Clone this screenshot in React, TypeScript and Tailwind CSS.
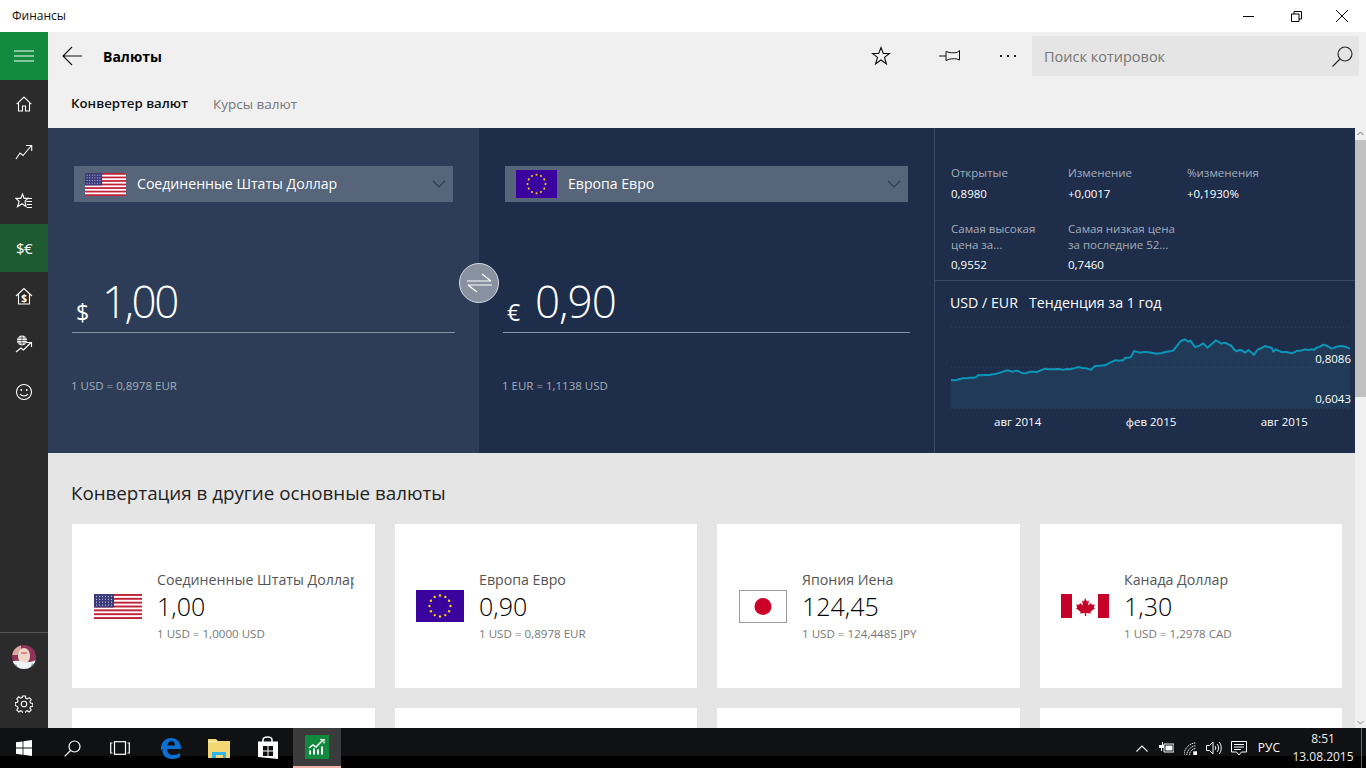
import React from 'react';

const font = { fontFamily: '"Open Sans", "Noto Sans", sans-serif' };

const chartLine =
  '63,212 72,213 80,212 90,209 100,207 110,207 120,205 130,205 138,204 145,197 155,198 165,197 178,197 190,195 200,193 210,190 222,186 235,183 242,186 250,187 258,184 265,185 272,189 280,192 290,191 300,187 310,187 320,188 332,183 345,178 357,180 370,180 385,179 400,181 410,179 420,180 432,177 445,173 458,176 470,177 478,180 483,181 495,170 510,169 525,168 540,160 555,153 568,154 580,152 586,145 595,145 603,143 612,125 620,127 630,130 640,128 650,128 665,130 680,133 695,131 710,127 720,126 730,123 742,108 752,95 760,92 765,90 772,95 775,97 782,94 785,100 795,113 803,111 810,108 820,102 826,108 832,115 845,104 858,93 866,98 875,103 883,100 890,102 905,110 912,120 920,126 928,122 935,123 945,130 955,122 965,130 972,137 980,124 985,120 995,116 1005,110 1015,113 1025,115 1030,127 1038,120 1045,124 1055,128 1070,128 1085,132 1095,128 1100,124 1112,124 1125,120 1135,122 1145,120 1152,121 1160,115 1170,112 1180,106 1192,110 1205,118 1220,112 1235,110 1248,113 1260,118';

const UsFlag = ({ className }: { className: string }) => (
  <svg viewBox="0 0 48 26" preserveAspectRatio="none" className={className}>
    <rect width="48" height="26" fill="#fff" />
    {[0, 4, 8, 12, 16, 20, 24].map((y) => (
      <rect key={y} y={y} width="48" height="2" fill="#c0223a" />
    ))}
    <rect width="20" height="14" fill="#3c3b7e" />
    {[2, 5, 8, 11].map((y) =>
      [2, 5, 8, 11, 14, 17].map((x) => <rect key={x + '-' + y} x={x} y={y} width="1" height="1" fill="#ddd" />)
    )}
  </svg>
);

const EuFlag = ({ className }: { className: string }) => {
  const stars = Array.from({ length: 12 }, (_, i) => i * 30);
  return (
    <svg viewBox="0 0 48 32" preserveAspectRatio="none" className={className}>
      <rect width="48" height="32" fill="#3a039d" />
      {stars.map((a) => (
        <circle
          key={a}
          cx={24 + 10.5 * Math.cos((a * Math.PI) / 180)}
          cy={16 + 10.5 * Math.sin((a * Math.PI) / 180)}
          r="1.2"
          fill="#f7d308"
        />
      ))}
    </svg>
  );
};

const JpFlag = ({ className }: { className: string }) => (
  <svg viewBox="0 0 48 33" className={className}>
    <rect x="0.5" y="0.5" width="47" height="32" fill="#fff" stroke="#999" />
    <circle cx="24" cy="16.5" r="8.5" fill="#cc0029" />
  </svg>
);

const CaFlag = ({ className }: { className: string }) => (
  <svg viewBox="0 0 48 24" className={className}>
    <rect width="48" height="24" fill="#fff" />
    <rect width="11" height="24" fill="#c60028" />
    <rect x="37" width="11" height="24" fill="#c60028" />
    <path
      d="M24 4l2 3.5 2-1-1 5 3-2.5.8 1.8 3-.4-1 3 1.2.8-4.6 3.6.5 1.7-4.7-.6V22h-1.4v-3.1l-4.7.6.5-1.7-4.6-3.6 1.2-.8-1-3 3 .4.8-1.8 3 2.5-1-5 2 1z"
      fill="#c60028"
    />
  </svg>
);

const Swap = () => (
  <svg width="25" height="20" viewBox="0 0 25 20" fill="none" stroke="#fff" strokeWidth="1.2">
    <path d="M0 8h24M15 1l9 7M1 12h24M1 12l9 7" />
  </svg>
);

const Chevron = () => (
  <svg width="14" height="8" viewBox="0 0 14 8" fill="none" stroke="#2f3b4e" strokeWidth="1.1">
    <path d="M1 1l6 6 6-6" />
  </svg>
);

const NavIcon = ({ children, active }: { children: React.ReactNode; active?: boolean }) => (
  <div className={'h-12 flex items-center justify-center text-white ' + (active ? 'bg-[#1e5b33]' : '')}>{children}</div>
);

const Stroke = ({ children, w = 18, h = 18 }: { children: React.ReactNode; w?: number; h?: number }) => (
  <svg width={w} height={h} viewBox={`0 0 ${w} ${h}`} fill="none" stroke="currentColor" strokeWidth="1.1">
    {children}
  </svg>
);

const Sidebar = () => (
  <div className="w-12 bg-[#2b2b2b] flex flex-col shrink-0">
    <div className="h-12 bg-[#118a3e] flex items-center justify-center">
      <svg width="20" height="12" viewBox="0 0 20 12" stroke="#fff" strokeWidth="1">
        <path d="M0 1h20M0 6h20M0 11h20" />
      </svg>
    </div>
    <NavIcon>
      <Stroke w={16} h={16}>
        <path d="M.7 8.2L8 1l7.3 7.2M2.5 7v8h4v-5h3v5h4V7" />
      </Stroke>
    </NavIcon>
    <NavIcon>
      <Stroke>
        <path d="M1 16l4-6 3 2.500 8.500-10M11 2.500h5.700v5.500" />
      </Stroke>
    </NavIcon>
    <NavIcon>
      <Stroke>
        <path d="M7.5 3l1.6 4.4H13L10 10.2l1 5.3-4-2.8-4.5 3 1.7-5.300L1 7.400h4.800zM11 7.500h6M11.500 10.500h5.500M12 13.500h5M12 16.500h5" />
      </Stroke>
    </NavIcon>
    <NavIcon active>
      <span className="text-[15px] leading-none tracking-[-0.5px]">$€</span>
    </NavIcon>
    <NavIcon>
      <Stroke>
        <path d="M1 9l8-7.500L17 9M3.500 7.500V17h11V7.500" />
        <text x="9" y="14.500" fontSize="10" fontWeight="700" textAnchor="middle" fill="currentColor" stroke="none">
          $
        </text>
      </Stroke>
    </NavIcon>
    <NavIcon>
      <Stroke>
        <circle cx="7" cy="5.500" r="5" fill="currentColor" stroke="none" />
        <path d="M7 .5v10M2 5.500h10M2.800 3h8.400M2.800 8h8.400" stroke="#2b2b2b" strokeWidth="0.700" />
        <path d="M1 17l5-4 2.500 2L16 7.500M11.500 7.500H16.500V12" />
      </Stroke>
    </NavIcon>
    <NavIcon>
      <Stroke>
        <circle cx="9" cy="9" r="7.500" />
        <circle cx="6.300" cy="7" r="0.900" fill="currentColor" stroke="none" />
        <circle cx="11.700" cy="7" r="0.900" fill="currentColor" stroke="none" />
        <path d="M5 11c1.800 2.600 6.200 2.600 8 0" />
      </Stroke>
    </NavIcon>
    <div className="mt-auto border-t border-[#555] h-12 flex items-center justify-center">
      <svg width="24" height="24" viewBox="0 0 24 24">
        <defs>
          <clipPath id="avatar">
            <circle cx="12" cy="12" r="12" />
          </clipPath>
        </defs>
        <g clipPath="url(#avatar)">
          <rect width="24" height="24" fill="#8c3557" />
          <rect width="9" height="10" fill="#d9a99f" />
          <ellipse cx="12" cy="11" rx="6" ry="8" fill="#eed7c8" />
          <rect x="9" y="7.500" width="6" height="1" fill="#c83a4d" />
          <path d="M0 24v-7c4-2 6-1 12 0s9-1 12-2v9z" fill="#eef3f3" />
          <path d="M2 19l3 1-1 3zM20 18l2 2-3 2z" fill="#6f9aa5" />
        </g>
      </svg>
    </div>
    <div className="h-12 flex items-center justify-center text-white">
      <Stroke>
        <circle cx="9" cy="9" r="2.800" />
        <path d="M7.600 1h2.800l.4 2.300 1.500.6 1.900-1.300 2 2-1.300 1.900.6 1.500 2.300.4v2.800l-2.300.4-.6 1.500 1.300 1.900-2 2-1.900-1.300-1.500.6-.4 2.300H7.600l-.4-2.300-1.500-.6-1.900 1.300-2-2 1.300-1.900-.6-1.500L.2 10.400V7.600l2.300-.4.6-1.500-1.300-1.900 2-2 1.900 1.300 1.500-.6z" />
      </Stroke>
    </div>
  </div>
);

const Converter = ({ flag, name, symbol, amount, rate, dropdown, line, bg, width, amountClass }: {
  flag: React.ReactNode;
  name: string;
  symbol: string;
  amount: string;
  rate: string;
  dropdown: string;
  line: string;
  bg: string;
  width: string;
  amountClass: string;
}) => (
  <div className={`${bg} ${width} pl-[26px] shrink-0 pt-[38px] flex flex-col`}>
    <div className={`${dropdown} h-9 bg-[#566579] flex items-center pl-[11px] pr-[7px] text-white`}>
      {flag}
      <span className="ml-[11px] text-[14.1px]">{name}</span>
      <span className="ml-auto">
        <Chevron />
      </span>
    </div>
    <div className={`${line} mt-[71px] -ml-0.5 h-[60px] border-b border-[#8a94a3] flex items-end pb-[3px] pl-1 text-white`}>
      <span className="text-[23px] leading-[34px] w-[28px]">{symbol}</span>
      <span className={`text-[44px] leading-[56px] font-light ${amountClass}`}>{amount}</span>
    </div>
    <div className="mt-[45px] -ml-[3px] text-[11.5px] text-[#a5adb9] leading-4">{rate}</div>
  </div>
);

const stats = [
  { label: 'Открытые', value: '0,8980' },
  { label: 'Изменение', value: '+0,0017' },
  { label: '%изменения', value: '+0,1930%' },
];

const StatsPanel = () => (
  <div className="flex-1 border-l border-[#3d4c66] bg-[#1d2d4a] text-white flex flex-col">
    <div className="h-[153px] border-b border-[#3d4c66] pl-4 pt-[37px] text-[11.5px]">
      <div className="grid grid-cols-[117px_119px_100px]">
        {stats.map((s) => (
          <div key={s.label}>
            <div className="h-4 leading-4 text-[#a5adb9]">{s.label}</div>
            <div className="mt-[5px] h-4 leading-4">{s.value}</div>
          </div>
        ))}
      </div>
      <div className="grid grid-cols-[117px_119px] mt-[19px]">
        <div>
          <div className="leading-4 text-[#a5adb9]">
            Самая высокая
            <br />
            цена за...
          </div>
          <div className="mt-1 leading-4">0,9552</div>
        </div>
        <div>
          <div className="leading-4 text-[#a5adb9]">
            Самая низкая цена
            <br />
            за последние 52...
          </div>
          <div className="mt-1 leading-4">0,7460</div>
        </div>
      </div>
    </div>
    <div className="pl-[15px] pt-[12px] text-[14.2px] leading-5 whitespace-pre">USD / EUR   Тенденция за 1 год</div>
    <div className="relative ml-4 mt-[13px] w-[400px] h-[84px]">
      <svg width="400" height="84" viewBox="63 50 1200 252" className="block">
        <polygon points={`63,297 ${chartLine} 1260,297`} fill="#203a58" />
        <path d="M63 54H1260M63 175H1260M63 297H1260" stroke="#34506c" strokeWidth="2" strokeDasharray="3 9" />
        <polyline points={chartLine} fill="none" stroke="#0a96b9" strokeWidth="6" strokeLinejoin="round" />
      </svg>
      <span className="absolute right-0 top-[25px] text-[11.5px] leading-4">0,8086</span>
      <span className="absolute right-0 top-[65px] text-[11.5px] leading-4">0,6043</span>
    </div>
    <div className="ml-4 w-[400px] grid grid-cols-3 text-center text-[11.5px] leading-4 mt-[4px]">
      <span>авг 2014</span>
      <span>фев 2015</span>
      <span>авг 2015</span>
    </div>
  </div>
);

const cards = [
  { name: 'Соединенные Штаты Доллар', value: '1,00', rate: '1 USD = 1,0000 USD', pad: 'pl-[22px]', flag: <UsFlag className="w-12 h-[25px]" /> },
  { name: 'Европа Евро', value: '0,90', rate: '1 USD = 0,8978 EUR', pad: 'pl-[21px]', flag: <EuFlag className="w-12 h-8" /> },
  { name: 'Япония Иена', value: '124,45', rate: '1 USD = 124,4485 JPY', pad: 'pl-[22px]', flag: <JpFlag className="w-12 h-[33px]" /> },
  { name: 'Канада Доллар', value: '1,30', rate: '1 USD = 1,2978 CAD', pad: 'pl-[21px]', flag: <CaFlag className="w-12 h-6" /> },
];

const Scrollbar = () => (
  <div className="w-[11px] shrink-0 bg-[#f0f0f0] flex flex-col items-center">
    <svg width="9" height="12" viewBox="0 0 9 12" fill="none" stroke="#666" className="shrink-0">
      <path d="M1.5 7l3-3 3 3" />
    </svg>
    <div className="w-full h-[257px] bg-[#c0c0c0]" />
    <svg width="9" height="12" viewBox="0 0 9 12" fill="none" stroke="#888" className="mt-auto shrink-0">
      <path d="M1.5 5l3 3 3-3" />
    </svg>
  </div>
);

const Taskbar = () => (
  <div className="h-10 shrink-0 bg-[linear-gradient(#0f1112_70%,#000_70%)] flex items-center text-white">
    <div className="w-12 flex justify-center">
      <svg width="16" height="16" viewBox="0 0 16 16" fill="#fff">
        <path d="M0 2.300l6.600-.9v6.200H0zM7.400 1.300L16 0v7.600H7.400zM0 8.400h6.600v6.300L0 13.800zM7.400 8.400H16V16l-8.600-1.200z" />
      </svg>
    </div>
    <div className="w-12 flex justify-center">
      <svg width="17" height="17" viewBox="0 0 17 17" fill="none" stroke="#fff" strokeWidth="1.2">
        <circle cx="10.5" cy="6.5" r="5.5" />
        <path d="M6.5 10.500L.7 16.300" />
      </svg>
    </div>
    <div className="w-12 flex justify-center">
      <svg width="20" height="14" viewBox="0 0 20 14" fill="none" stroke="#fff" strokeWidth="1.2">
        <rect x="4.5" y="0.7" width="11" height="12.6" />
        <path d="M2.5 2H.7v10h1.800M17.500 2h1.800v10h-1.800" />
      </svg>
    </div>
    <div className="w-[52px] flex justify-center">
      <svg width="21" height="22" viewBox="0 0 21 22" fill="none">
        <path
          d="M1 10C2 4 6 1 11 1c6 0 10 4 10 11H7c0 4 3 6 6 6 3 0 5-1 7-2v4c-2 1-4 2-8 2-6 0-10-4-9.500-9C3 11 2 12 1 14zM7.500 8.500h7.500c0-3-1.500-4.500-3.700-4.500S8 6 7.500 8.500z"
          fill="#0a6fd1"
        />
      </svg>
    </div>
    <div className="w-[46px] flex justify-center">
      <svg width="22" height="20" viewBox="0 0 22 20">
        <path d="M0 1h8l2 2h12v17H0z" fill="#f3d774" />
        <rect y="3" width="9" height="1.5" fill="#fff2b0" />
        <path d="M4 20v-6h14v6h-3v-3H8v3z" fill="#2eb6e8" />
      </svg>
    </div>
    <div className="w-[51px] flex justify-center">
      <svg width="22" height="24" viewBox="0 0 22 24" fill="none">
        <path d="M6 6V4c0-4 9-4 9 0v2" stroke="#fff" strokeWidth="1.5" />
        <path d="M1 5.500h20V23L1 21z" fill="#fff" />
        <path d="M6 10h4.500v4.500H6zM11.500 10H16v4.500h-4.500zM6 15.500h4.500V20H6zM11.500 15.500H16V20h-4.500z" fill="#111" />
      </svg>
    </div>
    <div className="w-12 h-full bg-[#3b3b3b] border-b-2 border-[#f4b3aa] flex justify-center items-center">
      <svg width="24" height="24" viewBox="0 0 24 24">
        <rect width="24" height="24" fill="#118a3e" />
        <path d="M4 13l4-3 3 2 7-7" fill="none" stroke="#fff" strokeWidth="1.5" />
        <path d="M15 4.500h4v4" fill="none" stroke="#fff" strokeWidth="1.2" />
        <path d="M4 15.500h2v4H4zM8 13.500h2v6H8zM12 14.500h2v5h-2zM16 11.500h2v8h-2z" fill="#fff" />
      </svg>
    </div>
    <div className="ml-auto flex items-center">
      <svg width="12" height="7" viewBox="0 0 12 7" fill="none" stroke="#fff" strokeWidth="1.1" className="mr-[10px]">
        <path d="M.5 6.500l5.500-5.500 5.500 5.500" />
      </svg>
      <svg width="16" height="12" viewBox="0 0 16 12" fill="#fff" className="mr-[10px]">
        <path d="M1 3h3V0h1v3h1V0h0v6H4v3H3V6H1z" />
        <path d="M6 2h10v8H6z" fill="none" stroke="#fff" />
        <rect x="7.5" y="3.5" width="7" height="5" />
      </svg>
      <svg width="13" height="13" viewBox="0 0 14 14" fill="none" stroke="#fff" className="mr-[9px]">
        <path d="M0 14C0 7 6 1 13 1M3 14c0-5 5-10 10-10M6 14c0-4 3-7 7-7" strokeDasharray="1.5 .7" />
        <rect x="10" y="10" width="4" height="4" fill="#fff" stroke="none" />
      </svg>
      <svg width="16" height="14" viewBox="0 0 16 14" fill="none" stroke="#fff" className="mr-[9px]">
        <path d="M.5 4.500h3L7 1v12L3.500 9.500h-3zM9 5c1 1 1 3 0 4M11 3c2 2 2 6 0 8M13 1c3 3 3 9 0 12" />
      </svg>
      <svg width="16" height="15" viewBox="0 0 16 15" fill="none" stroke="#fff" className="mr-[11px]">
        <path d="M.5.500h15v10.500h-5l-2.500 3-2.500-3h-5zM3 3.500h10M3 6h10M3 8.500h7" />
      </svg>
      <span className="text-[12px] mr-[10px]">РУС</span>
      <div className="w-[66px] text-center text-[12px] leading-[18px] mr-[5px] text-[#eee]">
        <div>8:51</div>
        <div>13.08.2015</div>
      </div>
      <div className="w-[1px] h-10 bg-[#666]" />
      <div className="w-1" />
    </div>
  </div>
);

const App = () => {
  return (
    <div style={font} className="w-[1366px] h-[768px] overflow-hidden flex flex-col bg-white">
      <div className="h-8 shrink-0 flex items-center pl-3 text-[12px] text-[#111]">
        Финансы
        <div className="ml-auto flex items-center">
          <svg width="11" height="1" className="mr-[37px]">
            <rect width="11" height="1" fill="#000" />
          </svg>
          <svg width="11" height="11" viewBox="0 0 11 11" fill="none" stroke="#000" className="mr-[33px]">
            <path d="M.5 3h7.500v7.500H.5zM3 3V.5h7.500V8H8" />
          </svg>
          <svg width="14" height="14" viewBox="0 0 14 14" stroke="#000" className="mr-[17px]">
            <path d="M1 1l12 12M13 1L1 13" />
          </svg>
        </div>
      </div>

      <div className="flex-1 flex min-h-0">
        <Sidebar />
        <div className="flex-1 flex flex-col min-w-0 bg-[#f0f0f0]">
          <div className="h-12 shrink-0 flex items-center pl-[14px] pr-[7px]">
            <svg width="20" height="20" viewBox="0 0 20 20" fill="none" stroke="#111" strokeWidth="1.1">
              <path d="M20 10H1M10 1l-9 9 9 9" />
            </svg>
            <span className="ml-[21px] text-[14px] font-bold text-black">Валюты</span>
            <svg width="20" height="20" viewBox="0 0 20 20" fill="none" stroke="#111" strokeWidth="1.1" className="ml-auto">
              <path d="M10 1.500l2.300 6h6.200l-5 3.900 1.900 6.400-5.400-3.800-5.400 3.800 1.900-6.400-5-3.900h6.200z" />
            </svg>
            <svg width="22" height="14" viewBox="0 0 22 14" fill="none" stroke="#111" className="ml-[48px]">
              <path d="M0 7h7M7 2.500c4 1.500 7 1.500 11 1l2.500-2V11l-2.500-1c-4-.5-7-.5-11 1.500z" />
            </svg>
            <div className="ml-[39px] w-4 flex justify-between">
              <span className="w-[2px] h-[2px] bg-[#222]" />
              <span className="w-[2px] h-[2px] bg-[#222]" />
              <span className="w-[2px] h-[2px] bg-[#222]" />
            </div>
            <div className="ml-4 w-[327px] h-10 bg-[#e5e5e5] flex items-center pl-3 pr-[6px]">
              <span className="text-[14.5px] text-[#767676] pt-[1px]">Поиск котировок</span>
              <svg width="21" height="21" viewBox="0 0 21 21" fill="none" stroke="#222" strokeWidth="1.1" className="ml-auto">
                <circle cx="13" cy="8" r="7" />
                <path d="M8 13l-7.500 7.500" />
              </svg>
            </div>
          </div>
          <div className="h-12 shrink-0 flex items-center pl-[23px]">
            <span className="font-semibold text-[13.25px] text-[#111]">Конвертер валют</span>
            <span className="ml-[25px] text-[13.5px] text-[#777]">Курсы валют</span>
          </div>

          <div className="flex-1 flex min-h-0">
            <div className="flex-1 min-w-0 overflow-hidden bg-[#e5e5e5]">
              <div className="relative h-[325px] flex">
                <Converter
                  bg="bg-[#2d3d57]"
                  width="w-[431px]"
                  dropdown="w-[379px]"
                  line="w-[383px]"
                  flag={<UsFlag className="w-[41px] h-[23px] shrink-0" />}
                  name="Соединенные Штаты Доллар"
                  symbol="$"
                  amount="1,00"
                  amountClass="-ml-[2px] tracking-[-2.5px]"
                  rate="1 USD = 0,8978 EUR"
                />
                <Converter
                  bg="bg-[#1d2d4a]"
                  width="w-[455px]"
                  dropdown="w-[403px]"
                  line="w-[407px]"
                  flag={<EuFlag className="w-[41px] h-7 shrink-0" />}
                  name="Европа Евро"
                  symbol="€"
                  amount="0,90"
                  amountClass="tracking-[-1px]"
                  rate="1 EUR = 1,1138 USD"
                />
                <StatsPanel />
                <div className="absolute left-[411px] top-[135px] w-10 h-10 rounded-full bg-[#87919f] border border-[#d5d9de] flex items-center justify-center">
                  <Swap />
                </div>
              </div>

              <div className="pl-6 pr-[13px]">
                <h2 className="pt-[27px] -ml-[1px] h-[71px] text-[18.75px] leading-[26px] text-[#222]">Конвертация в другие основные валюты</h2>
                <div className="grid grid-cols-[303px_302px_303px_302px] gap-5">
                  {cards.map((c) => (
                    <div key={c.name} className={`h-[164px] bg-white flex items-center ${c.pad}`}>
                      <div className="w-12 shrink-0 flex justify-center">{c.flag}</div>
                      <div className="ml-[15px] w-[197px] overflow-hidden whitespace-nowrap">
                        <div className="text-[14.2px] leading-5 text-[#555]">{c.name}</div>
                        <div className="-mt-[1px] text-[25px] leading-[34px] font-light text-black">{c.value}</div>
                        <div className="mt-[3px] text-[11.6px] leading-4 text-[#777]">{c.rate}</div>
                      </div>
                    </div>
                  ))}
                  {[0, 1, 2, 3].map((i) => (
                    <div key={i} className="h-[164px] bg-white" />
                  ))}
                </div>
              </div>
            </div>
            <Scrollbar />
          </div>
        </div>
      </div>

      <Taskbar />
    </div>
  );
};

export default App;
